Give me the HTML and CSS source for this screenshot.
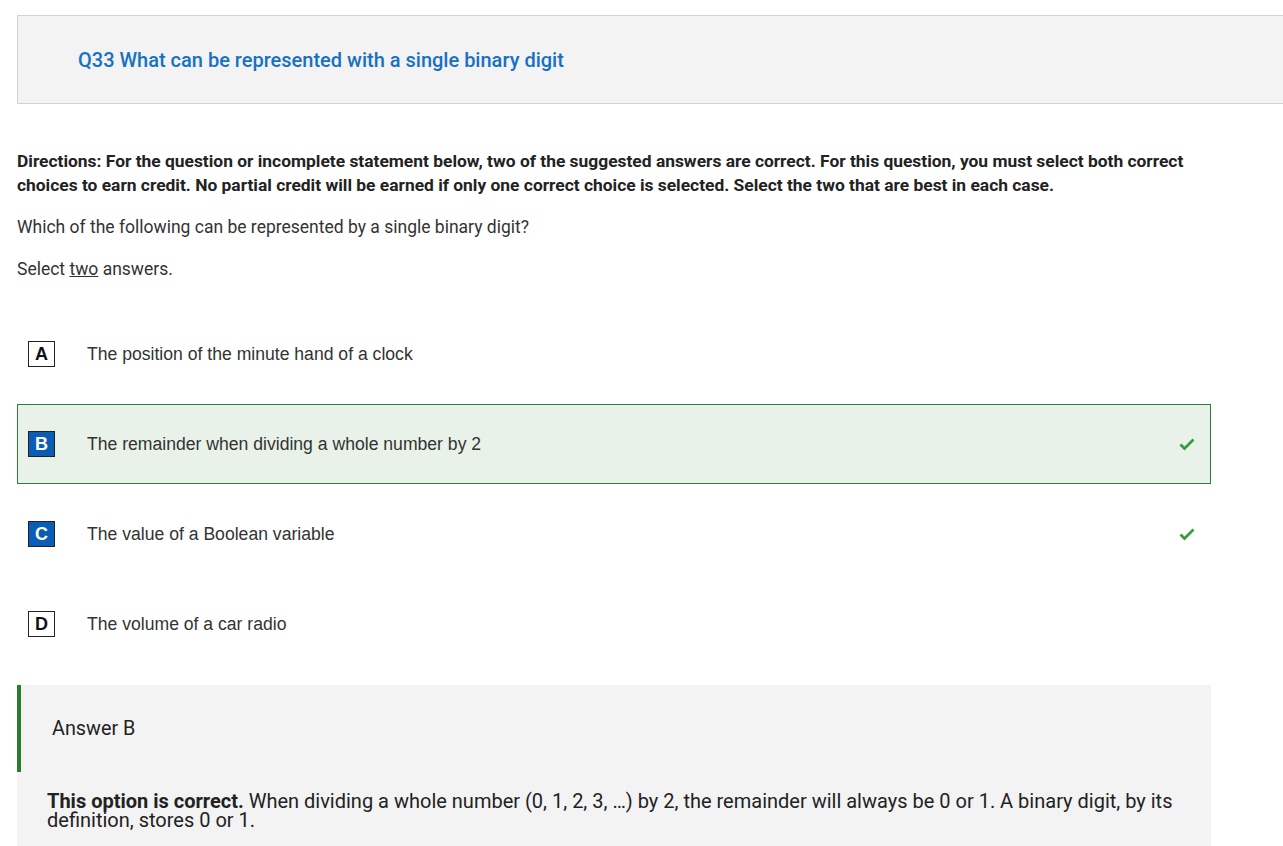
FILE: index.html
```html
<!DOCTYPE html>
<html lang="en">
<head>
<meta charset="utf-8">
<title>Q33</title>
<link rel="stylesheet" href="styles.css">
</head>
<body>
<div class="page">
  <div class="q-header">
    <h1 class="q-title">Q33 What can be represented with a single binary digit</h1>
  </div>

  <p class="directions">Directions: For the question or incomplete statement below, two of the suggested answers are correct. For this question, you must select both correct choices to earn credit. No partial credit will be earned if only one correct choice is selected. Select the two that are best in each case.</p>
  <p class="stem">Which of the following can be represented by a single binary digit?</p>
  <p class="stem">Select <span class="u">two</span> answers.</p>

  <div class="options">
    <div class="option">
      <span class="letter">A</span>
      <span class="opt-text">The position of the minute hand of a clock</span>
    </div>
    <div class="option selected">
      <span class="letter filled">B</span>
      <span class="opt-text">The remainder when dividing a whole number by 2</span>
      <svg class="check" width="16" height="13" viewBox="0 0 16 13"><path d="M1.5 6.5 L5.5 10.5 L14.5 1.5" fill="none" stroke="#3c9a3f" stroke-width="2.8"/></svg>
    </div>
    <div class="option">
      <span class="letter filled">C</span>
      <span class="opt-text">The value of a Boolean variable</span>
      <svg class="check" width="16" height="13" viewBox="0 0 16 13"><path d="M1.5 6.5 L5.5 10.5 L14.5 1.5" fill="none" stroke="#3c9a3f" stroke-width="2.8"/></svg>
    </div>
    <div class="option">
      <span class="letter">D</span>
      <span class="opt-text">The volume of a car radio</span>
    </div>
  </div>

  <div class="answer">
    <div class="answer-head">Answer B</div>
    <div class="answer-body"><b>This option is correct.</b> When dividing a whole number (0, 1, 2, 3, …) by 2, the remainder will always be 0 or 1. A binary digit, by its definition, stores 0 or 1.</div>
  </div>
</div>
</body>
</html>
```
FILE: styles.css
```css
html, body {
  margin: 0;
  padding: 0;
  background: #fff;
  overflow: hidden;
}
body {
  font-family: Roboto, "Liberation Sans", Arial, sans-serif;
  color: #333;
}
.page {
  padding: 15px 0 0 17px;
}
.q-header {
  width: 1290px;
  height: 87px;
  box-sizing: content-box;
  background: #f3f3f3;
  border: 1px solid #d3d3d3;
  display: flex;
  align-items: center;
}
.q-title {
  margin: 0 0 0 60px;
  font-size: 20px;
  font-weight: 500;
  color: #1670c4;
  line-height: 24px;
}
.directions {
  margin: 45px 0 0 0;
  width: 1194px;
  font-size: 17.4px;
  line-height: 24px;
  font-weight: 700;
  color: #222;
}
.stem {
  margin: 18px 0 0 0;
  font-size: 17.5px;
  line-height: 24px;
  color: #333;
}
.u {
  text-decoration: underline;
}
.options {
  margin-top: 33px;
  width: 1194px;
  display: flex;
  flex-direction: column;
  gap: 10px;
}
.option {
  height: 80px;
  box-sizing: border-box;
  border: 1px solid transparent;
  display: flex;
  align-items: center;
  padding: 0 14px 0 10px;
}
.option.selected {
  background: #e8f2e9;
  border-color: #2f7d32;
}
.letter {
  width: 27px;
  height: 26px;
  box-sizing: border-box;
  border: 1px solid #222;
  display: flex;
  align-items: center;
  justify-content: center;
  font-family: "Liberation Sans", Arial, sans-serif;
  font-weight: 700;
  font-size: 18px;
  color: #111;
}
.letter.filled {
  background: #0b5cb5;
  color: #fff;
}
.opt-text {
  margin-left: 32px;
  flex: 1;
  font-family: "Liberation Sans", Arial, sans-serif;
  font-size: 17.6px;
  color: #333;
}
.check {
  margin-right: 1px;
}
.answer {
  margin-top: 21px;
  width: 1194px;
  background: #f3f3f3;
  padding-bottom: 20px;
}
.answer-head {
  height: 87px;
  border-left: 4px solid #2a7d2e;
  padding-left: 31px;
  display: flex;
  align-items: center;
  font-size: 19.8px;
  color: #222;
}
.answer-body {
  padding: 20px 30px 0 30px;
  font-size: 20px;
  line-height: 19px;
  color: #222;
}
.answer-body b {
  font-weight: 700;
}
```
